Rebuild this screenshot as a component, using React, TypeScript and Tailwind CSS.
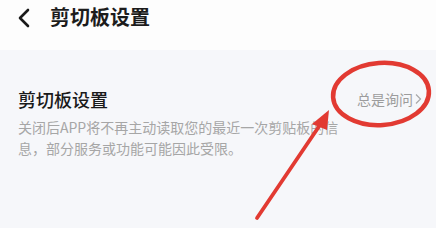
import React from "react";

export default function App() {
  const font = { fontFamily: '"Noto Sans CJK SC", "Noto Sans", sans-serif' };
  return (
    <div className="relative w-[436px] h-[228px] overflow-hidden bg-[#f6f7fa]" style={font}>
      <div className="h-[50px] bg-[#fdfdfd] flex items-start pt-[3px] pl-[17px]">
        <svg width="14" height="20" viewBox="0 0 14 20" className="mt-[5px]">
          <path d="M11 2 L3 10 L11 18" fill="none" stroke="#1a1a1a" strokeWidth="2.6" strokeLinecap="round" strokeLinejoin="round" />
        </svg>
        <div className="ml-[19px] text-[20px] leading-[28px] font-bold text-[#1c1c1c]">剪切板设置</div>
      </div>
      <div className="flex items-start justify-between pt-[37px] pl-[18px] pr-[14px]">
        <div>
          <div className="text-[18px] leading-[24px] font-medium text-[#1a1a1a]">剪切板设置</div>
          <div className="mt-[6px] text-[14px] leading-[21px] text-[#a6a6a6] whitespace-nowrap">
            关闭后APP将不再主动读取您的最近一次剪贴板的信
            <br />
            息，部分服务或功能可能因此受限。
          </div>
        </div>
        <div className="mt-[2px] flex items-center text-[14px] leading-[20px] text-[#9c9c9c]">
          <span>总是询问</span>
          <svg width="8" height="12" viewBox="0 0 8 12" className="ml-[1px]">
            <path d="M2 1.5 L6.5 6 L2 10.5" fill="none" stroke="#a8a8a8" strokeWidth="1.2" />
          </svg>
        </div>
      </div>
      <svg className="absolute left-0 top-0" width="436" height="228" viewBox="0 0 436 228">
        <ellipse cx="381" cy="94" rx="48" ry="31" fill="none" stroke="#e23a32" strokeWidth="4.5" transform="rotate(-4 381 94)" />
        <line x1="257" y1="218" x2="322" y2="122" stroke="#e23a32" strokeWidth="3.8" strokeLinecap="round" />
        <polygon points="329,110 312,124 327,130" fill="#e23a32" />
      </svg>
    </div>
  );
}
